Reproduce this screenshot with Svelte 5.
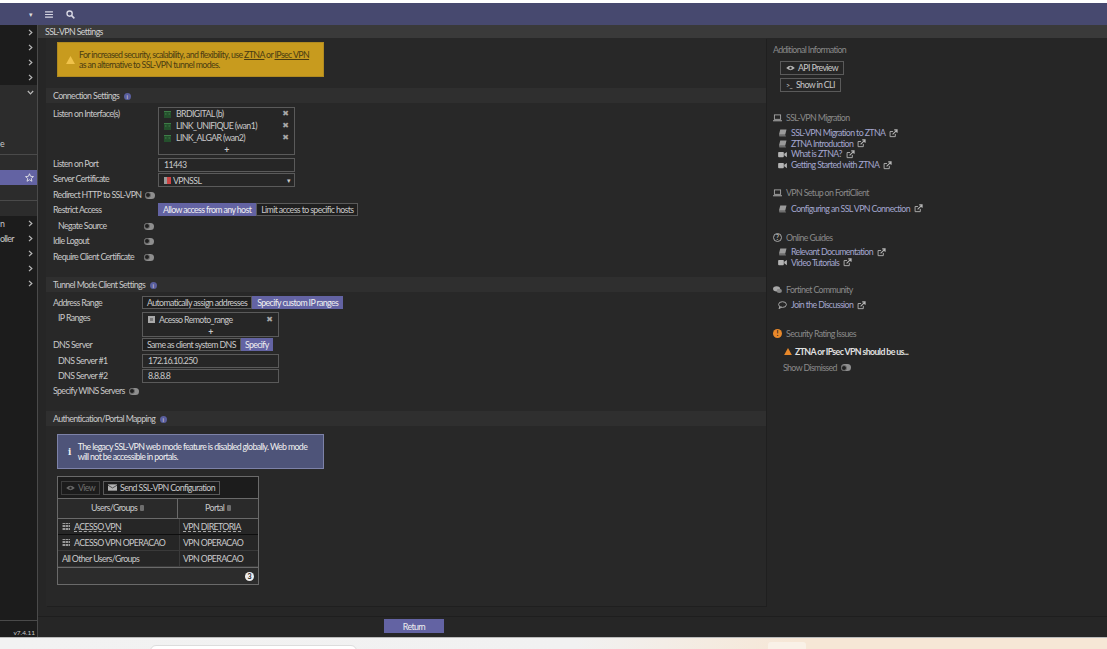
<script lang="ts">
  const connection = ['BRDIGITAL (b)', 'LINK_UNIFIQUE (wan1)', 'LINK_ALGAR (wan2)'];
  const sideTop = [0, 1, 2, 3];
  const sideBottom = ['n', 'oller', '', '', ''];
  const rows = [
    { user: 'ACESSO VPN', group: true, portal: 'VPN DIRETORIA', dashed: true },
    { user: 'ACESSO VPN OPERACAO', group: true, portal: 'VPN OPERACAO', dashed: false },
    { user: 'All Other Users/Groups', group: false, portal: 'VPN OPERACAO', dashed: false },
  ];
</script>

{#snippet toggle()}
  <span class="toggle"><span class="knob"></span></span>
{/snippet}

{#snippet info()}
  <span class="info-dot">i</span>
{/snippet}

{#snippet chev(down = false)}
  <svg class="chev" class:down viewBox="0 0 6 8" width="5" height="7">
    <path d="M1.2 .8L4.6 4L1.2 7.2" fill="none" stroke="#b8b8b8" stroke-width="1.5" />
  </svg>
{/snippet}

{#snippet ext()}
  <svg class="ext" viewBox="0 0 10 10" width="9" height="9">
    <path d="M7 5.5V8.5H1.2V2.8H4.5" fill="none" stroke="#b4b4b4" stroke-width="1" />
    <path d="M4 6L8.5 1.5M5.8 1H9V4.2" fill="none" stroke="#b4b4b4" stroke-width="1.2" />
  </svg>
{/snippet}

{#snippet book()}
  <svg class="ico" viewBox="0 0 10 9" width="9" height="8">
    <path d="M2.5 .5H9.5L8 6.5H1Z" fill="#9a9a9a" />
    <path d="M1 6.5H8L9 8.5H1.5Z" fill="#6e6e6e" />
  </svg>
{/snippet}

{#snippet video()}
  <svg class="ico" viewBox="0 0 10 8" width="9" height="7">
    <rect x="0" y="1" width="6.5" height="6" rx="1" fill="#b4b4b4" />
    <path d="M7 3.2L10 1V7L7 4.8Z" fill="#b4b4b4" />
  </svg>
{/snippet}

{#snippet laptop()}
  <svg class="head-ico" viewBox="0 0 10 9" width="9" height="8">
    <rect x="1.5" y="1" width="7" height="5" fill="none" stroke="#a8a8a8" stroke-width="1" />
    <rect x="0" y="7" width="10" height="1.2" fill="#a8a8a8" />
  </svg>
{/snippet}

{#snippet iface()}
  <svg class="iface" viewBox="0 0 7 7" width="7" height="7">
    <rect width="7" height="7" fill="#24502c" />
    <path d="M0 .5H7M1 3H2.5M4.5 3H6" stroke="#3f7d48" />
  </svg>
{/snippet}

<div class="page">
  <div class="topstrip"></div>
  <header class="topbar">
    <div class="top-left"><span class="caret">▾</span></div>
    <div class="top-tools">
      <svg viewBox="0 0 9 8" width="8" height="7"><path d="M0 1H9M0 4H9M0 7H9" stroke="#d8d8e4" stroke-width="1.3" /></svg>
      <svg viewBox="0 0 10 10" width="9" height="9"><circle cx="4" cy="4" r="2.9" fill="none" stroke="#d8d8e4" stroke-width="1.5" /><path d="M6 6L9.3 9.3" stroke="#d8d8e4" stroke-width="1.7" /></svg>
    </div>
  </header>

  <div class="body">
    <aside class="side">
      <div class="side-dark">
        {#each sideTop as _}
          <div class="side-row">{@render chev()}</div>
        {/each}
      </div>
      <div class="side-open">
        <div class="side-row">{@render chev(true)}</div>
        <div class="side-fill"></div>
        <div class="side-text">e</div>
      </div>
      <div class="side-gap line"></div>
      <div class="side-sel">
        <svg viewBox="0 0 10 10" width="9" height="9"><path d="M5 .8L6.2 3.7L9.4 4L7 6L7.7 9.2L5 7.5L2.3 9.2L3 6L.6 4L3.8 3.7Z" fill="none" stroke="#eee" stroke-width=".9" /></svg>
      </div>
      <div class="side-gap"></div>
      <div class="side-gap line"></div>
      <div class="side-dark">
        {#each sideBottom as item}
          <div class="side-row"><span class="side-label">{item}</span>{@render chev()}</div>
        {/each}
      </div>
      <div class="side-rest"></div>
      <div class="version">v7.4.11</div>
    </aside>

    <div class="main">
      <div class="crumb">SSL-VPN Settings</div>
      <div class="content">
        <section class="form">
          <div class="alert warn">
            <svg viewBox="0 0 10 9" width="9" height="8"><path d="M5 0L10 9H0Z" fill="#f0c24a" /></svg>
            <p>For increased security, scalability, and flexibility, use <u>ZTNA</u> or <u>IPsec VPN</u><br />as an alternative to SSL-VPN tunnel modes.</p>
          </div>

          <h3 class="band first">Connection Settings {@render info()}</h3>

          <div class="row r-if">
            <span class="lab">Listen on Interface(s)</span>
            <div class="box ifbox">
              {#each connection as c}
                <div class="chip">{@render iface()}<span>{c}</span><span class="x">✖</span></div>
              {/each}
              <div class="plus">+</div>
            </div>
          </div>
          <div class="row r-port">
            <span class="lab">Listen on Port</span>
            <div class="box field w137">11443</div>
          </div>
          <div class="row r-cert">
            <span class="lab">Server Certificate</span>
            <div class="box field w137 sel">
              <span class="cert"></span><span>VPNSSL</span><span class="drop">▾</span>
            </div>
          </div>
          <div class="row r-redir">
            <span class="lab auto">Redirect HTTP to SSL-VPN</span>{@render toggle()}
          </div>
          <div class="row r-restrict">
            <span class="lab">Restrict Access</span>
            <div class="seg">
              <span class="on">Allow access from any host</span><span>Limit access to specific hosts</span>
            </div>
          </div>
          <div class="row r-neg">
            <span class="lab sub tog">Negate Source</span>{@render toggle()}
          </div>
          <div class="row r-idle">
            <span class="lab tog">Idle Logout</span>{@render toggle()}
          </div>
          <div class="row r-req">
            <span class="lab tog">Require Client Certificate</span>{@render toggle()}
          </div>

          <h3 class="band b2">Tunnel Mode Client Settings {@render info()}</h3>

          <div class="row t-addr">
            <span class="lab short">Address Range</span>
            <div class="seg">
              <span>Automatically assign addresses</span><span class="on">Specify custom IP ranges</span>
            </div>
          </div>
          <div class="row t-ip">
            <span class="lab short sub">IP Ranges</span>
            <div class="box ipbox">
              <div class="chip"><span class="addr"></span><span>Acesso Remoto_range</span><span class="x">✖</span></div>
              <div class="plus">+</div>
            </div>
          </div>
          <div class="row t-dns">
            <span class="lab short">DNS Server</span>
            <div class="seg">
              <span>Same as client system DNS</span><span class="on narrow">Specify</span>
            </div>
          </div>
          <div class="row t-d1">
            <span class="lab short sub">DNS Server #1</span>
            <div class="box field w137">172.16.10.250</div>
          </div>
          <div class="row t-d2">
            <span class="lab short sub">DNS Server #2</span>
            <div class="box field w137">8.8.8.8</div>
          </div>
          <div class="row t-wins">
            <span class="lab auto">Specify WINS Servers</span>{@render toggle()}
          </div>

          <h3 class="band b3">Authentication/Portal Mapping {@render info()}</h3>

          <div class="alert note">
            <span class="i">i</span>
            <p>The legacy SSL-VPN web mode feature is disabled globally. Web mode<br />will not be accessible in portals.</p>
          </div>

          <div class="table">
            <div class="tools">
              <span class="btn dim">
                <svg viewBox="0 0 10 7" width="9" height="6"><path d="M0 3.5Q5 -1.5 10 3.5Q5 8.5 0 3.5Z" fill="#666" /><circle cx="5" cy="3.5" r="1.4" fill="#222" /></svg>
                View
              </span>
              <span class="btn">
                <svg viewBox="0 0 10 7" width="9" height="7"><rect width="10" height="7" fill="#b4b4b4" /><path d="M0 1L5 4L10 1" fill="none" stroke="#444" /></svg>
                Send SSL-VPN Configuration
              </span>
            </div>
            <div class="thead">
              <div>Users/Groups <span class="sort"></span></div>
              <div>Portal <span class="sort"></span></div>
            </div>
            {#each rows as r, i}
              <div class="tr" class:split={i === 0}>
                <div class="td" class:dashed={r.dashed}>
                  {#if r.group}<span class="grp"></span>{/if}<span>{r.user}</span>
                </div>
                <div class="td" class:dashed={r.dashed}><span>{r.portal}</span></div>
              </div>
            {/each}
            <div class="tfoot"><span class="count">3</span></div>
          </div>
        </section>

        <aside class="help">
          <h4 class="help-title">Additional Information</h4>
          <div class="help-btn">
            <svg viewBox="0 0 10 7" width="9" height="6"><path d="M0 3.5Q5 -1.5 10 3.5Q5 8.5 0 3.5Z" fill="#b4b4b4" /><circle cx="5" cy="3.5" r="1.4" fill="#2a2a2a" /></svg>
            API Preview
          </div>
          <div class="help-btn"><span class="prompt">&gt;_</span> Show in CLI</div>

          <h4 class="help-head h-mig">{@render laptop()} SSL-VPN Migration</h4>
          <a class="link">{@render book()}SSL-VPN Migration to ZTNA {@render ext()}</a>
          <a class="link">{@render book()}ZTNA Introduction {@render ext()}</a>
          <a class="link">{@render video()}What is ZTNA? {@render ext()}</a>
          <a class="link">{@render video()}Getting Started with ZTNA {@render ext()}</a>

          <h4 class="help-head h-fc">{@render laptop()} VPN Setup on FortiClient</h4>
          <a class="link">{@render book()}Configuring an SSL VPN Connection {@render ext()}</a>

          <h4 class="help-head h-guide">
            <span class="q">?</span> Online Guides
          </h4>
          <a class="link">{@render book()}Relevant Documentation {@render ext()}</a>
          <a class="link">{@render video()}Video Tutorials {@render ext()}</a>

          <h4 class="help-head h-comm">
            <svg class="head-ico" viewBox="0 0 10 9" width="9" height="8"><ellipse cx="4" cy="3.2" rx="4" ry="3" fill="#a8a8a8" /><ellipse cx="7" cy="5.5" rx="3" ry="2.4" fill="#888" /></svg>
            Fortinet Community
          </h4>
          <a class="link">
            <svg class="ico" viewBox="0 0 10 9" width="9" height="8"><ellipse cx="5" cy="4" rx="4.4" ry="3.2" fill="none" stroke="#b4b4b4" /><path d="M2 6.5L1 8.5L4 7" fill="none" stroke="#b4b4b4" /></svg>
            Join the Discussion {@render ext()}
          </a>

          <h4 class="help-head h-sec">
            <span class="sec">!</span> Security Rating Issues
          </h4>
          <div class="issue">
            <svg viewBox="0 0 10 9" width="8" height="7"><path d="M5 0L10 9H0Z" fill="#e8882a" /></svg>
            ZTNA or IPsec VPN should be us...
          </div>
          <div class="dismiss">Show Dismissed {@render toggle()}</div>
        </aside>
      </div>
      <footer class="foot"><button class="ret">Return</button></footer>
    </div>
  </div>
  <div class="browser">
    <div class="pill"><span class="pill-blue"></span></div>
    <div class="pill2"></div>
  </div>
</div>

<style>
  :global(body) {
    margin: 0;
    background: #262626;
    font-family: Lato, "Open Sans", sans-serif;
  }
  .page {
    width: 1107px;
    height: 649px;
    display: flex;
    flex-direction: column;
    overflow: hidden;
    font-size: 8.8px;
    line-height: 10px;
    letter-spacing: -0.62px;
    color: #c9c9c9;
  }
  .topstrip {
    height: 3px;
    background: #fff;
  }
  .topbar {
    height: 22px;
    background: #47496f;
    display: flex;
    align-items: center;
  }
  .top-left {
    width: 37px;
    display: flex;
    justify-content: flex-end;
    padding-right: 5px;
    box-sizing: border-box;
    font-size: 7px;
    color: #ddd;
  }
  .top-tools {
    display: flex;
    align-items: center;
    gap: 13px;
    padding-left: 8px;
  }
  .body {
    flex: 1;
    display: flex;
    min-height: 0;
  }
  .side {
    width: 38px;
    border-right: 1px solid #4a4a4a;
    box-sizing: border-box;
    display: flex;
    flex-direction: column;
    background: #2c2c2c;
    flex: none;
  }
  .side-dark {
    background: #1c1c1c;
  }
  .side-row {
    height: 15px;
    display: flex;
    align-items: center;
    justify-content: flex-end;
    padding-right: 4px;
  }
  .side-label {
    flex: 1;
  }
  .chev.down {
    transform: rotate(90deg);
  }
  .side-open {
    height: 69px;
    display: flex;
    flex-direction: column;
  }
  .side-fill {
    flex: 1;
  }
  .side-text {
    height: 15px;
  }
  .side-gap {
    height: 15px;
  }
  .side-gap.line {
    height: 16px;
    border-top: 1px solid #4a4a4a;
    box-sizing: border-box;
  }
  .side-sel {
    height: 15px;
    background: #6363a3;
    display: flex;
    align-items: center;
    justify-content: flex-end;
    padding-right: 3px;
  }
  .side-rest {
    flex: 1;
    background: #1c1c1c;
  }
  .version {
    background: #1c1c1c;
    border-top: 1px solid #4a4a4a;
    height: 17px;
    box-sizing: border-box;
    padding: 8px 2px 0 0;
    font-size: 6.5px;
    line-height: 8px;
    letter-spacing: 0;
    text-align: right;
  }
  .main {
    flex: 1;
    display: flex;
    flex-direction: column;
    min-width: 0;
  }
  .crumb {
    height: 13px;
    background: #3a3a3a;
    padding-left: 7px;
    line-height: 13px;
    color: #d0d0d0;
  }
  .content {
    flex: 1;
    display: flex;
    min-height: 0;
    background: #262626;
  }
  .form {
    width: 720px;
    margin-left: 8px;
    height: 568px;
    background: #282828;
    box-sizing: border-box;
    box-shadow: 1px 1px 0 #1f1f1f;
  }
  .alert {
    width: 267px;
    height: 35px;
    box-sizing: border-box;
    margin-left: 11px;
    display: flex;
    align-items: center;
    gap: 4px;
    padding-left: 8px;
  }
  .alert p {
    margin: 0;
    line-height: 9.5px;
  }
  .warn {
    margin-top: 4px;
    background: #c89b1e;
    border: 1px solid #b08a20;
    color: #4a3c12;
  }
  .band {
    margin: 0;
    height: 15px;
    font-weight: 400;
    font-size: 8.8px;
    line-height: 15px;
    background: #2f2f2f;
    padding-left: 7px;
    color: #c9c9c9;
  }
  .band.first {
    margin-top: 11px;
  }
  .info-dot {
    display: inline-block;
    width: 7px;
    height: 7px;
    border-radius: 50%;
    background: #5a5f9e;
    color: #ddd;
    font-size: 6px;
    line-height: 7px;
    letter-spacing: 0;
    text-align: center;
    margin-left: 3px;
  }
  .row {
    display: flex;
    align-items: center;
    padding-left: 7px;
  }
  .lab {
    width: 105px;
    flex: none;
  }
  .lab.short {
    width: 89px;
  }
  .lab.tog {
    width: 91px;
  }
  .lab.auto {
    width: auto;
    margin-right: 4px;
  }
  .lab.sub {
    padding-left: 5px;
    box-sizing: border-box;
  }
  .box {
    border: 1px solid #5a5a5a;
    box-sizing: border-box;
    background: #262626;
  }
  .w137 {
    width: 137px;
  }
  .field {
    height: 14px;
    padding-left: 5px;
    line-height: 11px;
  }
  .sel {
    display: flex;
    align-items: center;
    gap: 2px;
  }
  .drop {
    margin-left: auto;
    margin-right: 4px;
    font-size: 7px;
  }
  .cert {
    width: 7px;
    height: 7px;
    background: linear-gradient(90deg, #999 50%, #c44 50%);
  }
  .ifbox {
    width: 137px;
    height: 48px;
    padding: 0 5px;
  }
  .ipbox {
    width: 137px;
    height: 25px;
    padding: 0 5px;
  }
  .chip {
    display: flex;
    align-items: center;
    height: 12px;
  }
  .ifbox .chip {
    gap: 5px;
  }
  .ipbox .chip {
    gap: 4px;
    height: 13px;
  }
  .x {
    margin-left: auto;
    font-family: "DejaVu Sans", sans-serif;
    font-size: 8px;
    letter-spacing: 0;
    color: #a8a8a8;
  }
  .plus {
    text-align: center;
    font-weight: 700;
    height: 11px;
    line-height: 11px;
  }
  .iface {
    flex: none;
  }
  .addr {
    width: 7px;
    height: 7px;
    background: #777;
    border: 2px solid #aaa;
    box-sizing: border-box;
  }
  .toggle {
    width: 10px;
    height: 7px;
    border-radius: 4px;
    background: #8e8e8e;
    display: inline-flex;
    align-items: center;
    flex: none;
  }
  .knob {
    width: 6px;
    height: 6px;
    border-radius: 50%;
    background: #202020;
    border: 1px solid #6e6e6e;
    box-sizing: border-box;
  }
  .seg {
    display: flex;
    height: 13px;
    line-height: 11px;
  }
  .seg span {
    border: 1px solid #5a5a5a;
    background: #1f1f1f;
    padding: 0 4px;
    box-sizing: border-box;
    white-space: nowrap;
  }
  .seg span.on {
    background: #6363a3;
    border-color: #6363a3;
    color: #f0f0f0;
  }
  .seg span.narrow {
    padding: 0 3px;
  }
  .r-if { margin-top: 4px; align-items: flex-start; }
  .r-if .lab { padding-top: 2px; }
  .r-port { margin-top: 3px; }
  .r-port .lab, .r-cert .lab { margin-bottom: 2px; }
  .r-cert { margin-top: 1px; }
  .r-redir { margin-top: 3px; height: 10px; }
  .r-restrict { margin-top: 3px; }
  .r-neg { margin-top: 4px; height: 12px; }
  .r-idle { margin-top: 3px; height: 12px; }
  .r-req { margin-top: 4px; height: 12px; }
  .band.b2 { margin-top: 14px; }
  .t-addr { margin-top: 4px; }
  .t-ip { margin-top: 3px; align-items: flex-start; }
  .t-ip .lab { padding-top: 1px; }
  .t-dns { margin-top: 1px; }
  .t-d1 { margin-top: 3px; height: 14px; }
  .t-d2 { margin-top: 1px; height: 14px; }
  .t-wins { margin-top: 3px; height: 10px; }
  .band.b3 { margin-top: 15px; }
  .note {
    margin-top: 8px;
    background: #4e5479;
    border: 1px solid #7d82a8;
    color: #f0f0f0;
    gap: 7px;
    padding-left: 10px;
  }
  .note .i {
    font-family: "DejaVu Serif", serif;
    font-weight: 700;
  }
  .table {
    margin: 7px 0 0 11px;
    width: 202px;
    height: 109px;
    box-sizing: border-box;
    border: 1px solid #6a6a6a;
    display: flex;
    flex-direction: column;
  }
  .tools {
    height: 22px;
    flex: none;
    background: #1c1c1c;
    display: flex;
    align-items: center;
    gap: 3px;
    padding-left: 3px;
    border-bottom: 1px solid #6a6a6a;
    box-sizing: border-box;
  }
  .btn {
    height: 14px;
    border: 1px solid #5a5a5a;
    box-sizing: border-box;
    display: flex;
    align-items: center;
    gap: 3px;
    padding: 0 4px;
  }
  .btn.dim {
    color: #6e6e6e;
    border-color: #3e3e3e;
  }
  .thead {
    height: 20px;
    flex: none;
    display: grid;
    grid-template-columns: 120px 1fr;
    background: #2a2a2a;
    border-bottom: 1px solid #6a6a6a;
    box-sizing: border-box;
  }
  .thead div {
    text-align: center;
    line-height: 18px;
  }
  .thead div:first-child {
    border-right: 1px solid #6a6a6a;
  }
  .sort {
    display: inline-block;
    width: 4px;
    height: 6px;
    border-radius: 1px;
    background: #6e6e6e;
    margin-left: 1px;
  }
  .tr {
    height: 16px;
    flex: none;
    display: grid;
    grid-template-columns: 121px 1fr;
    border-bottom: 1px solid #3a3a3a;
    box-sizing: border-box;
    background: #262626;
  }
  .tr.split {
    border-bottom-color: #0e0e0e;
  }
  .td {
    display: flex;
    align-items: center;
    gap: 4px;
    padding-left: 4px;
    white-space: nowrap;
    overflow: hidden;
  }
  .td:last-child {
    border-left: 1px solid #3a3a3a;
    padding-left: 3px;
  }
  .dashed span:last-child {
    border-bottom: 1px dashed #aaa;
    line-height: 9px;
  }
  .grp {
    width: 8px;
    height: 8px;
    background:
      repeating-linear-gradient(90deg, rgba(40, 40, 40, .55) 0 1px, transparent 1px 3px),
      repeating-linear-gradient(0deg, rgba(40, 40, 40, .55) 0 1px, #9a9a9a 1px 3px);
    flex: none;
  }
  .tfoot {
    flex: 1;
    background: #2c2c2c;
    border-top: 1px solid #6a6a6a;
    display: flex;
    align-items: center;
    justify-content: flex-end;
    padding-right: 4px;
  }
  .count {
    width: 9px;
    height: 9px;
    border-radius: 50%;
    background: #eee;
    color: #222;
    font-size: 7px;
    line-height: 9px;
    letter-spacing: 0;
    text-align: center;
    font-weight: 700;
  }
  .help {
    flex: 1;
    padding: 7px 0 0 7px;
    min-width: 0;
  }
  .help-title, .help-head {
    margin: 0;
    font-weight: 400;
    font-size: 8.8px;
    color: #8a8a8a;
  }
  .help-btn {
    margin: 6px 0 0 7px;
    width: fit-content;
    height: 14px;
    border: 1px solid #5a5a5a;
    box-sizing: border-box;
    padding: 0 5px;
    line-height: 12px;
    color: #c9c9c9;
    display: flex;
    align-items: center;
    gap: 3px;
  }
  .help-btn + .help-btn {
    margin-top: 3px;
  }
  .prompt {
    font-size: 7px;
    margin-right: 1px;
  }
  .head-ico {
    margin-right: 2px;
  }
  .help-head {
    display: flex;
    align-items: center;
    gap: 2px;
    margin-bottom: 5px;
  }
  .h-mig { margin-top: 21px; }
  .h-fc { margin-top: 18px; }
  .h-guide { margin-top: 19px; margin-bottom: 4px; }
  .h-comm { margin-top: 17px; }
  .h-sec { margin-top: 18px; }
  .link {
    display: flex;
    align-items: center;
    gap: 3px;
    margin-left: 5px;
    height: 10.6px;
    color: #a4a6cf;
  }
  .ico {
    flex: none;
    margin-right: 1px;
  }
  .ext {
    margin-left: 1px;
  }
  .q {
    width: 9px;
    height: 9px;
    border: 1px solid #a8a8a8;
    border-radius: 50%;
    box-sizing: border-box;
    font-size: 6.5px;
    font-weight: 700;
    line-height: 7px;
    letter-spacing: 0;
    text-align: center;
    color: #b8b8b8;
    margin-right: 2px;
  }
  .sec {
    width: 9px;
    height: 9px;
    border-radius: 50%;
    background: #e8882a;
    color: #222;
    font-size: 7px;
    line-height: 9px;
    letter-spacing: 0;
    text-align: center;
    font-weight: 700;
    margin-right: 2px;
  }
  .issue {
    display: flex;
    align-items: center;
    gap: 3px;
    margin: 8px 0 0 11px;
    color: #e0e0e0;
    font-weight: 700;
  }
  .dismiss {
    display: flex;
    align-items: center;
    gap: 4px;
    margin: 6px 0 0 10px;
    color: #8a8a8a;
  }
  .foot {
    height: 21px;
    background: #262626;
    border-top: 1px solid #1e1e1e;
    box-sizing: border-box;
    padding: 2px 0 0 346px;
  }
  .ret {
    display: block;
    width: 60px;
    height: 14px;
    padding: 0;
    border: none;
    background: #6363a3;
    color: #eee;
    font-family: inherit;
    font-size: 8.8px;
    letter-spacing: inherit;
  }
  .browser {
    height: 12px;
    flex: none;
    background: linear-gradient(90deg, #f2f2f2 0%, #f1f1f1 52%, #f6e7d6 72%, #f6e7d6 100%);
    border-top: 1px solid #bbb;
    box-sizing: border-box;
    position: relative;
    overflow: hidden;
  }
  .pill {
    position: absolute;
    left: 150px;
    top: 7px;
    width: 205px;
    height: 10px;
    background: #fff;
    border: 1px solid #ddd;
    border-radius: 8px;
  }
  .pill-blue {
    position: absolute;
    left: 170px;
    top: 3px;
    width: 29px;
    height: 4px;
    background: #5a80c8;
  }
  .pill2 {
    position: absolute;
    left: 768px;
    top: 4px;
    width: 38px;
    height: 12px;
    background: #f9f1e7;
    border-radius: 3px;
  }
</style>
